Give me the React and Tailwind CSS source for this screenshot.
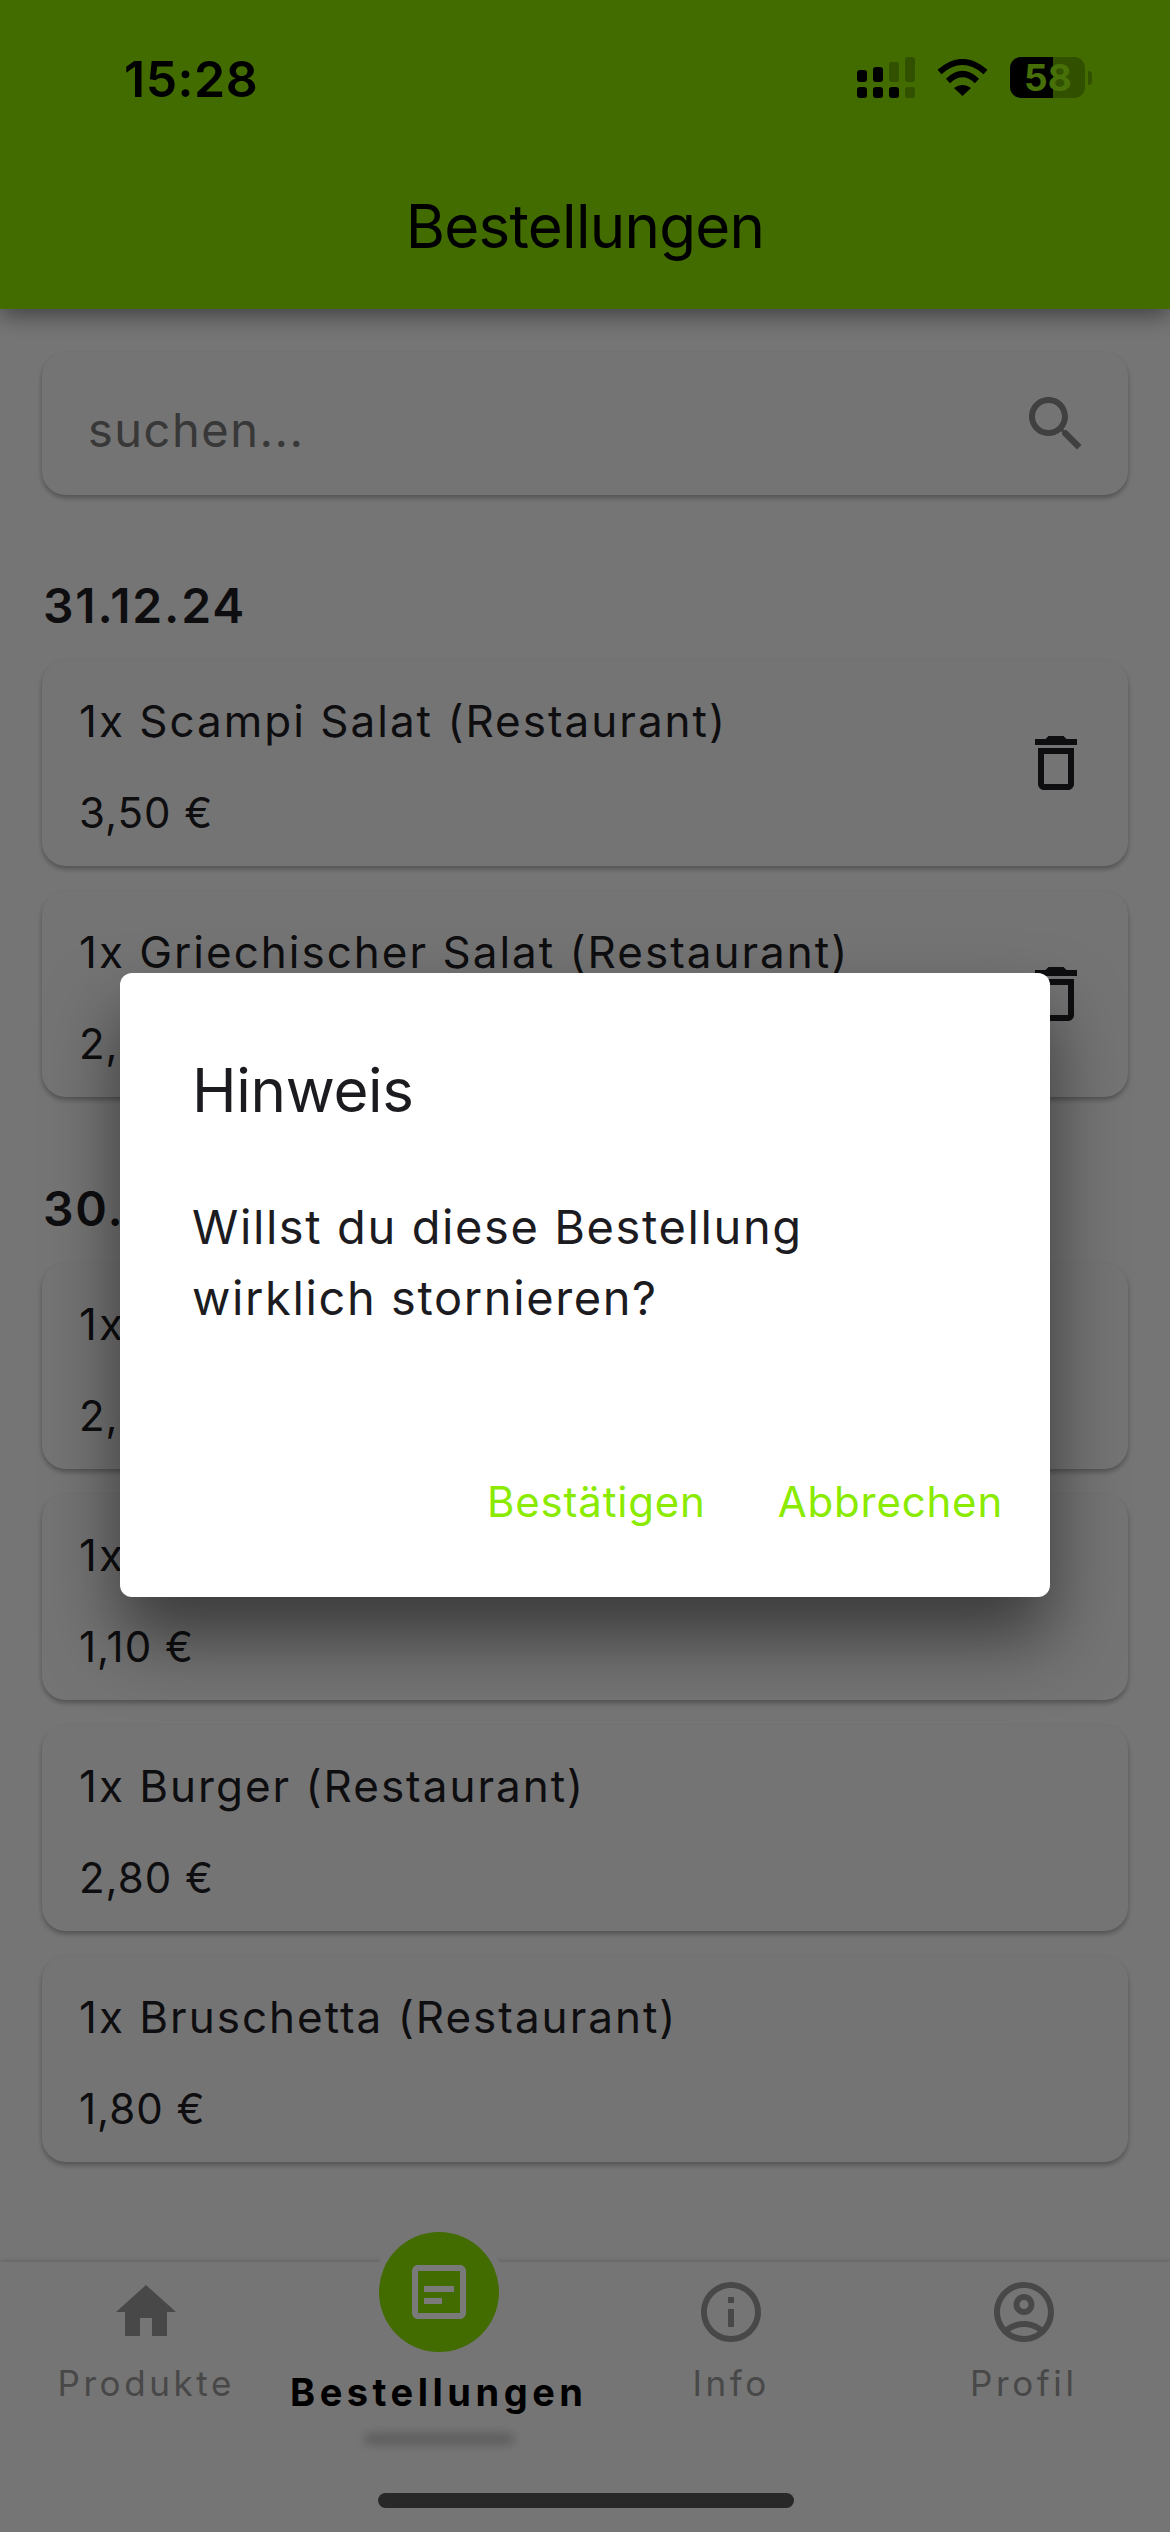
import React from "react";

const font = { fontFamily: "Inter, 'Liberation Sans', sans-serif" };

function MI({ d, className, fillRule }) {
  return (
    <svg viewBox="0 0 24 24" className={className} fill="currentColor">
      <path d={d} fillRule={fillRule} />
    </svg>
  );
}

const ICONS = {
  trash: "M6 19c0 1.1.9 2 2 2h8c1.1 0 2-.9 2-2V7H6v12zM8 9h8v10H8V9zm7.5-5l-1-1h-5l-1 1H5v2h14V4h-3.5z",
  search: "M15.5 14h-.79l-.28-.27C15.41 12.59 16 11.11 16 9.5 16 5.91 13.09 3 9.5 3S3 5.91 3 9.5 5.91 16 9.5 16c1.61 0 3.09-.59 4.23-1.57l.27.28v.79l5 4.99L20.49 19l-4.99-5zm-6 0C7.01 14 5 11.99 5 9.5S7.01 5 9.5 5 14 7.01 14 9.5 11.99 14 9.5 14z",
  home: "M10 20v-6h4v6h5v-8h3L12 3 2 12h3v8z",
  info: "M11 7h2v2h-2zm0 4h2v6h-2zm1-9C6.48 2 2 6.48 2 12s4.48 10 10 10 10-4.48 10-10S17.52 2 12 2zm0 18c-4.41 0-8-3.59-8-8s3.59-8 8-8 8 3.59 8 8-3.59 8-8 8z",
  profile: "M12 2C6.48 2 2 6.48 2 12s4.48 10 10 10 10-4.48 10-10S17.52 2 12 2zM7.35 18.5C8.66 17.56 10.26 17 12 17s3.34.56 4.65 1.5C15.34 19.44 13.74 20 12 20s-3.34-.56-4.65-1.5zm10.79-1.38C16.45 15.8 14.32 15 12 15s-4.45.8-6.14 2.12C4.7 15.73 4 13.95 4 12c0-4.42 3.58-8 8-8s8 3.58 8 8c0 1.95-.7 3.73-1.86 5.12zM12 6c-1.93 0-3.5 1.57-3.5 3.5S10.07 13 12 13s3.5-1.57 3.5-3.5S13.93 6 12 6zm0 5c-.83 0-1.5-.67-1.5-1.5S11.17 8 12 8s1.5.67 1.5 1.5S12.83 11 12 11z",
  feed: "M5 3h14c1.1 0 2 .9 2 2v14c0 1.1-.9 2-2 2H5c-1.1 0-2-.9-2-2V5c0-1.1.9-2 2-2zm0 2v14h14V5H5zm2 5h10v2H7v-2zm0 4h6v2H7v-2z",
};

function Signal() {
  return (
    <svg width="58" height="41" viewBox="0 0 58 41" fill="black">
      <rect x="0" y="13" width="10" height="12" rx="3" />
      <rect x="16" y="10" width="10" height="15" rx="3" />
      <rect x="32" y="5" width="10" height="20" rx="3" opacity="0.25" />
      <rect x="48" y="0" width="10" height="25" rx="3" opacity="0.25" />
      <rect x="0" y="30" width="10" height="11" rx="3" />
      <rect x="16" y="30" width="10" height="11" rx="3" />
      <rect x="32" y="30" width="10" height="11" rx="3" />
      <rect x="48" y="30" width="10" height="11" rx="3" opacity="0.25" />
    </svg>
  );
}

function Wifi() {
  return (
    <svg width="51" height="37" viewBox="0 0 51 37" fill="none" stroke="black">
      <path d="M2.5 13 Q25.5 -7 48.5 13" strokeWidth="6" />
      <path d="M11 22 Q25.5 8 40 22" strokeWidth="6" />
      <path d="M17 29 Q25.5 23 34 29 L25.5 37 Z" fill="black" stroke="none" />
    </svg>
  );
}

function Battery() {
  return (
    <div className="relative flex h-[41px] w-[82px] items-center">
      <div className="flex h-[41px] w-[75px] overflow-hidden rounded-[11px]">
        <div className="h-full w-[43px] bg-black" />
        <div className="h-full flex-1 bg-black/25" />
      </div>
      <div className="ml-[3px] h-[14px] w-[4px] rounded-r-full bg-black/25" />
      <span className="absolute left-[14px] top-0 text-[37px] font-bold leading-[41px] text-[#90e010]">58</span>
    </div>
  );
}

function Order({ title, price }) {
  return (
    <div className="flex h-[206px] items-center justify-between rounded-[24px] bg-[#e8e8e8] pl-[37px] pr-[36px] shadow-[0_3px_5px_rgba(0,0,0,0.3)]">
      <div className="flex flex-col gap-[32px] pt-[8px] text-[#1c1b1f]">
        <div className="text-[44px] leading-[60px] tracking-[2px]">{title}</div>
        <div className="text-[42px] leading-[60px] tracking-[1px]">{price}</div>
      </div>
    </div>
  );
}

function DeletableOrder({ title, price }) {
  return (
    <div className="relative">
      <Order title={title} price={price} />
      <div className="absolute right-[36px] top-[67px] text-[#1c1b1f]">
        <MI d={ICONS.trash} className="h-[72px] w-[72px]" />
      </div>
    </div>
  );
}

function NavItem({ icon, label }) {
  return (
    <div className="flex flex-col items-center pt-[14px] text-[#909090]">
      <MI d={icon} className="h-[72px] w-[72px]" />
      <div className="mt-[10px] text-[35px] leading-[50px] tracking-[3.6px]">{label}</div>
    </div>
  );
}

export default function App() {
  return (
    <div className="relative flex h-[2532px] w-[1170px] flex-col overflow-hidden bg-[#ebebeb]" style={font}>
      <header className="relative z-10 flex h-[309px] shrink-0 flex-col bg-[#84d600] shadow-[0_6px_22px_rgba(0,0,0,0.45)]">
        <div className="flex h-[190px] items-start justify-between pl-[124px] pr-[78px] pt-[50px]">
          <span className="text-[50px] font-semibold leading-[58px] tracking-[0.5px] text-black">15:28</span>
          <div className="flex items-center gap-[22px] pt-[7px]">
            <Signal />
            <Wifi />
            <Battery />
          </div>
        </div>
        <h1 className="text-center text-[60px] font-normal leading-[72px] tracking-[-0.7px] text-black">Bestellungen</h1>
      </header>

      <main className="flex flex-1 flex-col px-[42px] pt-[43px]">
        <div className="flex h-[143px] items-center justify-between rounded-[24px] bg-[#e8e8e8] pl-[46px] pr-[36px] shadow-[0_3px_5px_rgba(0,0,0,0.3)]">
          <span className="pt-[14px] text-[47px] tracking-[1.5px] text-[#707070]">suchen...</span>
          <MI d={ICONS.search} className="h-[72px] w-[72px] text-[#808080]" />
        </div>

        <div className="ml-[1px] mt-[81px] text-[48px] font-semibold leading-[60px] tracking-[1.8px] text-[#1c1b1f]">31.12.24</div>
        <div className="mt-[24px] flex flex-col gap-[25px]">
          <DeletableOrder title="1x Scampi Salat (Restaurant)" price="3,50 €" />
          <DeletableOrder title="1x Griechischer Salat (Restaurant)" price="2,30 €" />
        </div>

        <div className="ml-[1px] mt-[82px] text-[48px] font-semibold leading-[60px] tracking-[1.8px] text-[#1c1b1f]">30.12.24</div>
        <div className="mt-[24px] flex flex-col gap-[25px]">
          <Order title="1x Burger (Restaurant)" price="2,80 €" />
          <Order title="1x Limonade (Restaurant)" price="1,10 €" />
          <Order title="1x Burger (Restaurant)" price="2,80 €" />
          <Order title="1x Bruschetta (Restaurant)" price="1,80 €" />
        </div>
      </main>

      <nav className="relative grid h-[270px] shrink-0 grid-cols-4 bg-[#ebebeb] shadow-[0_-2px_4px_rgba(0,0,0,0.12)]">
        <NavItem icon={ICONS.home} label="Produkte" />
        <div className="relative flex flex-col items-center">
          <div className="-mt-[30px] flex h-[120px] w-[120px] items-center justify-center rounded-full bg-[#84d600] text-[#f4f4f4] shadow-[0_0_0_7px_#ebebeb]">
            <MI d={ICONS.feed} className="h-[72px] w-[72px]" />
          </div>
          <div className="mt-[15px] whitespace-nowrap text-[38px] font-bold leading-[50px] tracking-[4.5px] text-black">Bestellungen</div>
          <div className="absolute left-[71px] top-[171px] h-[12px] w-[150px] rounded-full bg-black/20 blur-[5px]" />
        </div>
        <NavItem icon={ICONS.info} label="Info" />
        <NavItem icon={ICONS.profile} label="Profil" />
        <div className="absolute bottom-[24px] left-[378px] h-[15px] w-[416px] rounded-full bg-[#505050]" />
      </nav>

      <div className="absolute inset-0 z-20 flex items-start justify-center bg-black/50 pt-[973px]">
        <div className="flex h-[624px] w-[930px] flex-col rounded-[12px] bg-white pl-[72px] pr-[47px] shadow-[0_40px_70px_rgba(0,0,0,0.5)]">
          <div className="mt-[81px] text-[60px] font-normal leading-[72px] tracking-[-0.3px] text-[#1c1b1f]">Hinweis</div>
          <div className="mt-[65px] text-[47px] leading-[71px] tracking-[1.6px] text-[#1c1b1f]">
            Willst du diese Bestellung
            <br />
            wirklich stornieren?
          </div>
          <div className="mt-[139px] flex justify-end gap-[72px] text-[42px] leading-[60px] tracking-[0.8px] text-[#8aeb00]">
            <span>Bestätigen</span>
            <span>Abbrechen</span>
          </div>
        </div>
      </div>
    </div>
  );
}
